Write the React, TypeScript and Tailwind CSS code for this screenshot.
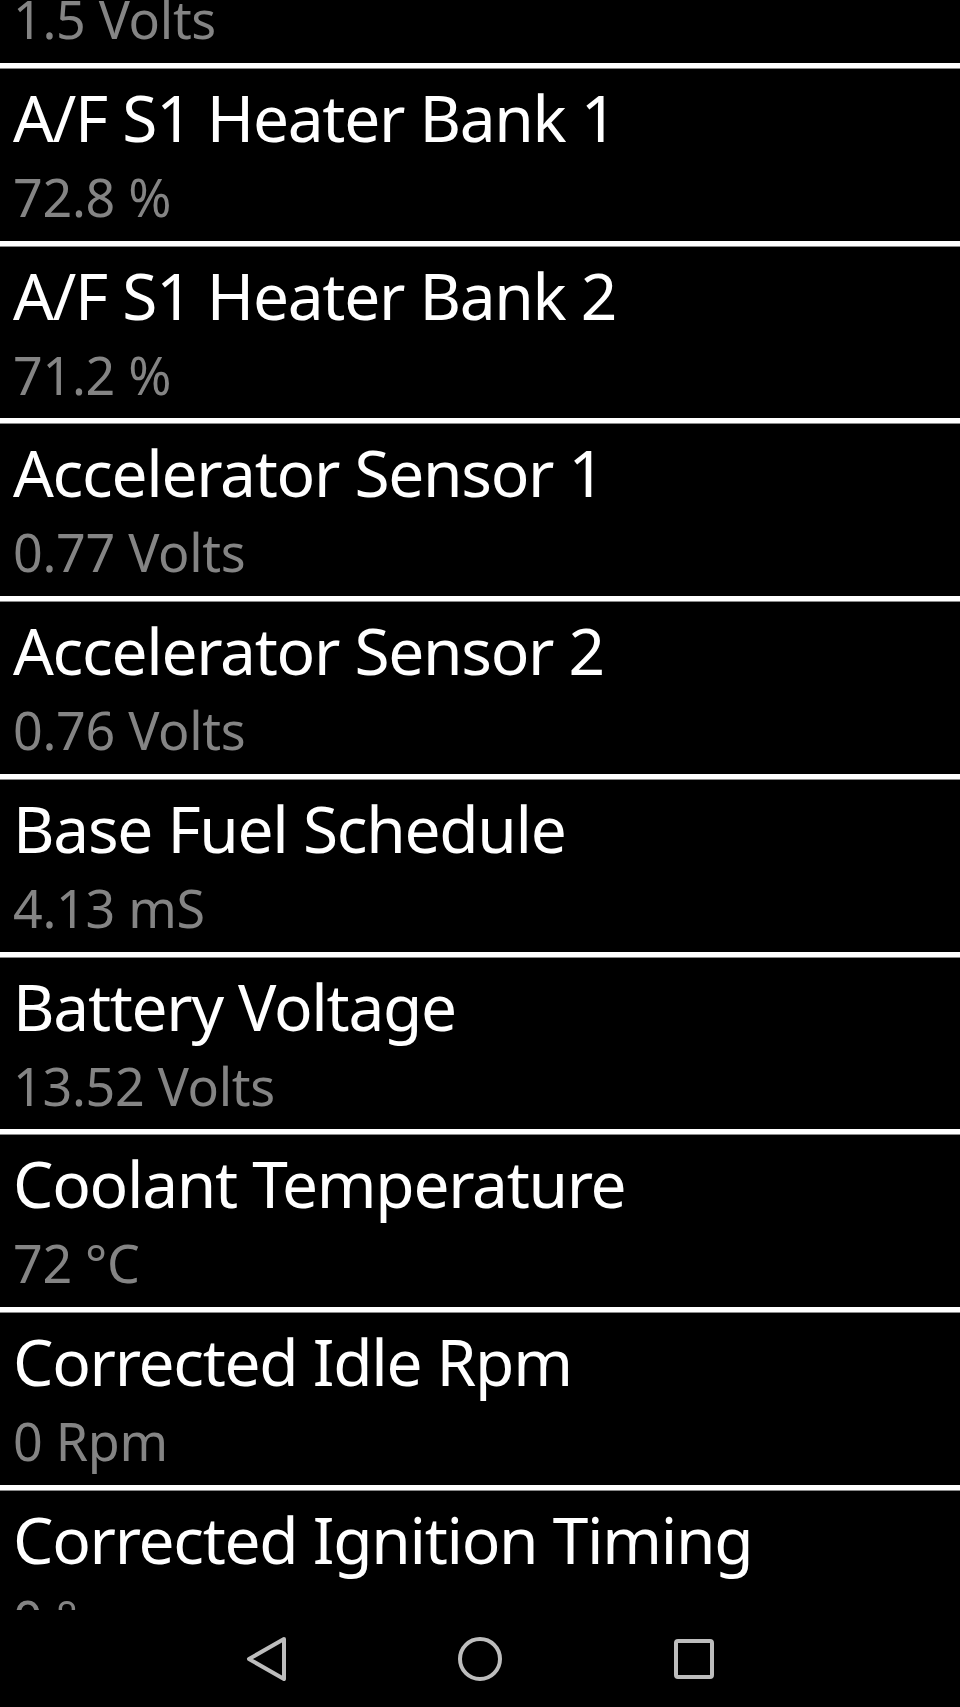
import React from 'react'

interface Reading { name: string; value: string }

const readings: Reading[] = [
  { name: 'A/F Sensor 1 Bank 2', value: '1.5 Volts' },
  { name: 'A/F S1 Heater Bank 1', value: '72.8 %' },
  { name: 'A/F S1 Heater Bank 2', value: '71.2 %' },
  { name: 'Accelerator Sensor 1', value: '0.77 Volts' },
  { name: 'Accelerator Sensor 2', value: '0.76 Volts' },
  { name: 'Base Fuel Schedule', value: '4.13 mS' },
  { name: 'Battery Voltage', value: '13.52 Volts' },
  { name: 'Coolant Temperature', value: '72 °C' },
  { name: 'Corrected Idle Rpm', value: '0 Rpm' },
  { name: 'Corrected Ignition Timing', value: '0 °' },
]

function ReadingRow({ r }: { r: Reading }) {
  return (
    <div className="flex flex-col">
      <div className="h-[6px] bg-white border-b border-[#8a8a8a]" />
      <div className="h-[171.75px] pl-[13px] pt-[11px] whitespace-nowrap">
        <div className="text-[64px] leading-[76px] tracking-[-1.3px] text-white">{r.name}</div>
        <div className="mt-[6px] text-[52px] leading-[70px] tracking-[-0.3px] text-[#848484]">{r.value}</div>
      </div>
    </div>
  )
}

function NavBar() {
  return (
    <div className="h-[97px] shrink-0 flex items-center justify-center gap-[170px] bg-black">
      <svg width="44" height="44" viewBox="0 0 44 44" fill="none" stroke="#bdbdbd" strokeWidth="4" strokeLinejoin="round">
        <path d="M40 2 L5 22 L40 42 Z" />
      </svg>
      <svg width="44" height="44" viewBox="0 0 44 44" fill="none" stroke="#bdbdbd" strokeWidth="4">
        <circle cx="22" cy="22" r="20" />
      </svg>
      <svg width="44" height="44" viewBox="0 0 44 44" fill="none" stroke="#bdbdbd" strokeWidth="4" strokeLinejoin="round">
        <rect x="4" y="4" width="36" height="36" rx="2" />
      </svg>
    </div>
  )
}

export default function App() {
  return (
    <div className="w-[960px] h-[1707px] bg-black flex flex-col overflow-hidden font-['Noto_Sans',sans-serif]">
      <div className="flex-1 overflow-hidden">
        <div className="-mt-[115px]">
          {readings.map(r => <ReadingRow key={r.name} r={r} />)}
        </div>
      </div>
      <NavBar />
    </div>
  )
}
